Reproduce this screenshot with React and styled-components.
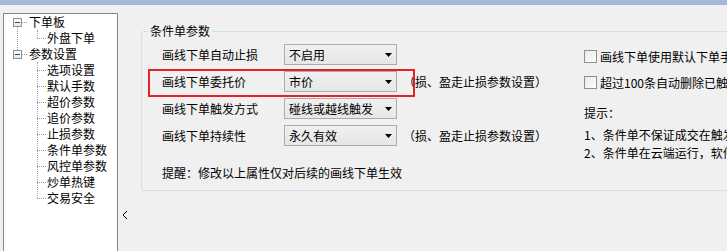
import React from 'react';
import styled, { createGlobalStyle } from 'styled-components';

const GlobalStyle = createGlobalStyle`
  html, body {
    margin: 0;
    padding: 0;
    background: #f0f0f0;
    overflow: hidden;
  }
  body {
    font-family: "Noto Sans CJK SC", "Noto Sans", sans-serif;
    font-size: 12px;
    color: #000;
  }
`;

const Page = styled.div`
  width: 727px;
  height: 251px;
  overflow: hidden;
  display: flex;
  flex-direction: column;
  background: #f0f0f0;
`;

const TopBar = styled.div`
  height: 5px;
  flex-shrink: 0;
  background: #a1b9d5;
`;

const Main = styled.div`
  display: flex;
  flex: 1;
  min-height: 0;
`;

const TreePanel = styled.div`
  margin: 8px 0 0 3px;
  width: 115px;
  height: 260px;
  flex-shrink: 0;
  box-sizing: border-box;
  border: 1px solid #828790;
  background: #fff;
  line-height: 16px;
`;

const TreeNode = styled.div`
  position: relative;
  &::before {
    content: '';
    display: ${p => (p.$hasNext ? 'block' : 'none')};
    position: absolute;
    left: 13px;
    top: 13px;
    bottom: -4px;
    border-left: 1px dotted #a0a0a0;
  }
`;

const TreeRow = styled.div`
  display: flex;
  align-items: center;
  height: 16px;
  padding-left: ${p => (p.$child ? 33 : 9)}px;
  white-space: nowrap;
`;

const Expander = styled.span`
  position: relative;
  width: 9px;
  height: 9px;
  box-sizing: border-box;
  border: 1px solid #919191;
  background: linear-gradient(#ffffff, #e6e6e6);
  flex-shrink: 0;
  &::after {
    content: '';
    position: absolute;
    left: 1px;
    top: 3px;
    width: 5px;
    height: 1px;
    background: #2c4a8e;
  }
`;

const Connector = styled.span`
  width: ${p => p.$w}px;
  border-top: 1px dotted #a0a0a0;
  flex-shrink: 0;
`;

const TreeLabel = styled.span`
  margin-left: ${p => p.$gap}px;
`;

const Children = styled.div`
  position: relative;
  &::before {
    content: '';
    position: absolute;
    left: 33px;
    top: 0;
    bottom: 8px;
    border-left: 1px dotted #a0a0a0;
  }
`;

const Splitter = styled.div`
  width: 23px;
  flex-shrink: 0;
  padding: 201px 0 0 4px;
  box-sizing: border-box;
`;

const Content = styled.div`
  flex: 1;
  min-width: 0;
  padding-top: 18px;
`;

const GroupBox = styled.fieldset`
  margin: 0;
  padding: 2px 0 0 0;
  width: 640px;
  min-width: 0;
  height: 168px;
  box-sizing: border-box;
  border: 1px solid #d5dfe5;
  border-radius: 3px;
`;

const Legend = styled.legend`
  margin-left: 6px;
  padding: 0 2px;
  line-height: 16px;
  font-size: 12px;
`;

const GroupBody = styled.div`
  display: flex;
  padding-left: 20px;
`;

const LeftCol = styled.div`
  width: 422px;
  flex-shrink: 0;
`;

const Row = styled.div`
  position: relative;
  display: flex;
  align-items: center;
  height: 27px;
  white-space: nowrap;
  &::after {
    content: '';
    display: ${p => (p.$highlight ? 'block' : 'none')};
    position: absolute;
    left: -14px;
    top: 1px;
    width: 267px;
    height: 28px;
    box-sizing: border-box;
    border: 2px solid #e3212b;
    pointer-events: none;
  }
`;

const FieldLabel = styled.span`
  width: 122px;
  flex-shrink: 0;
`;

const Select = styled.div`
  display: flex;
  align-items: center;
  justify-content: space-between;
  width: 113px;
  height: 21px;
  box-sizing: border-box;
  padding: 0 4px 0 4px;
  border: 1px solid #acacac;
  background: linear-gradient(#f0f0f0, #e6e6e6);
  flex-shrink: 0;
`;

const Note = styled.span`
  margin-left: 6px;
`;

const Reminder = styled.div`
  margin-top: 16px;
  line-height: 16px;
`;

const RightCol = styled.div`
  padding-top: 2px;
  white-space: nowrap;
`;

const CheckRow = styled.label`
  display: flex;
  align-items: center;
  height: 26px;
`;

const CheckBox = styled.span`
  width: 13px;
  height: 13px;
  box-sizing: border-box;
  border: 1px solid #8e8f8f;
  background: linear-gradient(135deg, #e9e9e9, #ffffff);
  margin-right: 3px;
  flex-shrink: 0;
`;

const TipTitle = styled.div`
  margin-top: 9px;
  line-height: 18px;
`;

const TipLine = styled.div`
  margin-top: ${p => p.$gap || 0}px;
  line-height: 18px;
`;

const DownArrow = () => (
  <svg width="7" height="4" viewBox="0 0 7 4">
    <polygon points="0,0 7,0 3.5,4" fill="#000" />
  </svg>
);

const LeftChevron = () => (
  <svg width="6" height="10" viewBox="0 0 6 10">
    <polyline points="5,1 1,5 5,9" fill="none" stroke="#000" strokeWidth="1" />
  </svg>
);

const tree = [
  { label: '下单板', children: ['外盘下单'] },
  {
    label: '参数设置',
    children: ['选项设置', '默认手数', '超价参数', '追价参数', '止损参数', '条件单参数', '风控单参数', '炒单热键', '交易安全'],
  },
];

const rows = [
  { label: '画线下单自动止损', value: '不启用' },
  { label: '画线下单委托价', value: '市价', note: true, highlight: true },
  { label: '画线下单触发方式', value: '碰线或越线触发' },
  { label: '画线下单持续性', value: '永久有效', note: true },
];

export default function App() {
  return (
    <>
      <GlobalStyle />
      <Page>
        <TopBar />
        <Main>
          <TreePanel>
            {tree.map((node, i) => (
              <TreeNode key={node.label} $hasNext={i < tree.length - 1}>
                <TreeRow>
                  <Expander />
                  <Connector $w={5} />
                  <TreeLabel $gap={2}>{node.label}</TreeLabel>
                </TreeRow>
                <Children>
                  {node.children.map(c => (
                    <TreeRow key={c} $child>
                      <Connector $w={9} />
                      <TreeLabel $gap={1}>{c}</TreeLabel>
                    </TreeRow>
                  ))}
                </Children>
              </TreeNode>
            ))}
          </TreePanel>
          <Splitter>
            <LeftChevron />
          </Splitter>
          <Content>
            <GroupBox>
              <Legend>条件单参数</Legend>
              <GroupBody>
                <LeftCol>
                  {rows.map(r => (
                    <Row key={r.label} $highlight={r.highlight}>
                      <FieldLabel>{r.label}</FieldLabel>
                      <Select>
                        <span>{r.value}</span>
                        <DownArrow />
                      </Select>
                      {r.note && <Note>（损、盈走止损参数设置）</Note>}
                    </Row>
                  ))}
                  <Reminder>提醒：修改以上属性仅对后续的画线下单生效</Reminder>
                </LeftCol>
                <RightCol>
                  <CheckRow>
                    <CheckBox />
                    画线下单使用默认下单手数
                  </CheckRow>
                  <CheckRow>
                    <CheckBox />
                    超过100条自动删除已触发条件单
                  </CheckRow>
                  <TipTitle>提示：</TipTitle>
                  <TipLine $gap={4}>1、条件单不保证成交在触发价</TipLine>
                  <TipLine>2、条件单在云端运行，软件关闭后仍有效</TipLine>
                </RightCol>
              </GroupBody>
            </GroupBox>
          </Content>
        </Main>
      </Page>
    </>
  );
}
